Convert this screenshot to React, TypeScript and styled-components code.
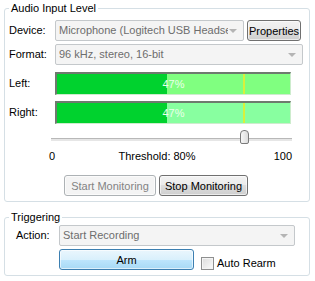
import React from "react";
import styled, { createGlobalStyle } from "styled-components";

const Global = createGlobalStyle`
  html, body {
    margin: 0;
    padding: 0;
    background: #ffffff;
  }
  body {
    font-family: "Liberation Sans", Arial, sans-serif;
    font-size: 11px;
    color: #000000;
  }
`;

const Page = styled.div`
  width: 315px;
  height: 281px;
  padding-top: 8px;
  box-sizing: border-box;
`;

const GroupBox = styled.section<{ $gap?: number }>`
  margin: ${(p) => p.$gap || 0}px 5px 0 4px;
  border: 1px solid #d5dfe5;
  border-radius: 3px;
  padding: 0 0 5px 0;
`;

const GroupTitle = styled.div`
  display: table;
  margin: -8px 0 0 4px;
  padding: 0 2px;
  background: #ffffff;
  line-height: 15px;
`;

const FormGrid = styled.div<{ $label: number; $left: number }>`
  display: grid;
  grid-template-columns: ${(p) => p.$label}px 1fr;
  padding-left: ${(p) => p.$left}px;
  align-items: center;
`;

const Label = styled.span<{ $top?: number }>`
  line-height: 15px;
  margin-top: ${(p) => p.$top || 0}px;
`;

const Row = styled.div<{ $top: number }>`
  display: flex;
  align-items: center;
  margin-top: ${(p) => p.$top}px;
`;

const Combo = styled.div<{ $width: number }>`
  position: relative;
  width: ${(p) => p.$width}px;
  height: 21px;
  box-sizing: border-box;
  border: 1px solid #c4c8cb;
  border-radius: 2px;
  background: #f4f4f4;
  color: #6d6d6d;
  line-height: 19px;
  padding: 0 15px 0 3px;
  &::after {
    content: "";
    position: absolute;
    right: 6px;
    top: 8px;
    border-left: 4px solid transparent;
    border-right: 4px solid transparent;
    border-top: 4px solid #b4b4b4;
  }
`;

const ComboText = styled.span`
  display: block;
  white-space: nowrap;
  overflow: hidden;
`;

const Button = styled.button<{ $width: number; $variant?: "disabled" | "hot" | "normal" }>`
  width: ${(p) => p.$width}px;
  height: 21px;
  box-sizing: border-box;
  padding: 0;
  font-family: inherit;
  font-size: 11px;
  border-radius: 3px;
  border: 1px solid
    ${(p) => (p.$variant === "disabled" ? "#adb2b5" : p.$variant === "hot" ? "#3c7fb1" : "#707070")};
  color: ${(p) => (p.$variant === "disabled" ? "#838383" : "#000000")};
  background: ${(p) =>
    p.$variant === "disabled"
      ? "#f4f4f4"
      : p.$variant === "hot"
      ? "linear-gradient(#eaf6fd 0%, #d9f0fc 50%, #bee6fd 50%, #a7d9f5 100%)"
      : "linear-gradient(#f2f2f2 0%, #ebebeb 50%, #dddddd 50%, #cfcfcf 100%)"};
  box-shadow: inset 0 0 0 1px rgba(255, 255, 255, 0.6);
`;

const MeterBox = styled.div`
  position: relative;
  display: flex;
  width: 236px;
  height: 23px;
  box-sizing: border-box;
  border-top: 2px solid #6e7a6e;
  border-left: 2px solid #6e7a6e;
  border-right: 1px solid #cdeccd;
  border-bottom: 1px solid #cdeccd;
`;

const FillHot = styled.div`
  background: #00d22e;
`;

const FillRest = styled.div<{ $tint: string }>`
  flex: 1;
  background: ${(p) => p.$tint};
`;

const ThresholdLine = styled.div`
  position: absolute;
  top: 0;
  bottom: 0;
  width: 2px;
  background: #d8f03c;
`;

const MeterText = styled.span`
  position: absolute;
  inset: 0;
  text-align: center;
  line-height: 20px;
  color: #eaffea;
`;

const SliderArea = styled.div`
  position: relative;
  margin: 3px 0 0 46px;
  width: 241px;
  height: 20px;
`;

const Track = styled.div`
  position: absolute;
  left: 0;
  right: 0;
  top: 11px;
  height: 3px;
  box-sizing: border-box;
  border-top: 1px solid #b8b8b8;
  background: #e6e6e6;
`;

const Thumb = styled.div`
  position: absolute;
  top: 3px;
  width: 9px;
  height: 14px;
  margin-left: -4px;
  box-sizing: border-box;
  border: 1px solid #7a7a7a;
  border-radius: 4px 4px 2px 2px;
  background: linear-gradient(90deg, #f6f6f6, #dcdcdc);
`;

const Ticks = styled.div`
  display: grid;
  grid-template-columns: 1fr auto 1fr;
  margin-top: 2px;
  line-height: 15px;
`;

const TickLeft = styled.span`
  padding-left: 44px;
`;

const TickRight = styled.span`
  text-align: right;
  padding-right: 17px;
`;

const ButtonRow = styled.div`
  display: flex;
  gap: 3px;
  margin: 11px 0 0 59px;
`;

const Check = styled.span`
  display: inline-block;
  width: 13px;
  height: 13px;
  box-sizing: border-box;
  border: 1px solid #8e8f8f;
  background: linear-gradient(135deg, #dcdcdc, #fbfbfb);
  box-shadow: inset 0 0 0 1px #f4f4f4;
  margin: 0 3px 0 7px;
`;

const CheckLabel = styled.label`
  display: flex;
  align-items: center;
  padding-top: 7px;
`;

function Meter({ percent, threshold, tint }: { percent: number; threshold: number; tint: string }) {
  return (
    <MeterBox>
      <FillHot style={{ width: `${percent}%` }} />
      <FillRest $tint={tint} />
      <ThresholdLine style={{ left: `${threshold}%` }} />
      <MeterText>{percent}%</MeterText>
    </MeterBox>
  );
}

export default function App() {
  return (
    <Page>
      <Global />
      <GroupBox>
        <GroupTitle>Audio Input Level</GroupTitle>
        <FormGrid $label={46} $left={4}>
          <Label $top={4}>Device:</Label>
          <Row $top={4}>
            <Combo $width={189}>
              <ComboText>Microphone (Logitech USB Headset)</ComboText>
            </Combo>
            <Button $width={54} style={{ marginLeft: 3 }}>Properties</Button>
          </Row>
          <Label $top={3}>Format:</Label>
          <Row $top={3}>
            <Combo $width={248}>
              <ComboText>96 kHz, stereo, 16-bit</ComboText>
            </Combo>
          </Row>
          <Label $top={7}>Left:</Label>
          <Row $top={7}>
            <Meter percent={47} threshold={80} tint="#80ff80" />
          </Row>
          <Label $top={6}>Right:</Label>
          <Row $top={6}>
            <Meter percent={47} threshold={80} tint="#88ffa0" />
          </Row>
        </FormGrid>
        <SliderArea>
          <Track />
          <Thumb style={{ left: "80%" }} />
        </SliderArea>
        <Ticks>
          <TickLeft>0</TickLeft>
          <span>Threshold: 80%</span>
          <TickRight>100</TickRight>
        </Ticks>
        <ButtonRow>
          <Button $width={92} $variant="disabled" disabled>
            Start Monitoring
          </Button>
          <Button $width={89}>Stop Monitoring</Button>
        </ButtonRow>
      </GroupBox>
      <GroupBox $gap={15}>
        <GroupTitle>Triggering</GroupTitle>
        <FormGrid $label={43} $left={11}>
          <Label>Action:</Label>
          <Combo $width={236}>
            <ComboText>Start Recording</ComboText>
          </Combo>
          <span />
          <Row $top={3}>
            <Button $width={135} $variant="hot">Arm</Button>
            <CheckLabel>
              <Check />
              Auto Rearm
            </CheckLabel>
          </Row>
        </FormGrid>
      </GroupBox>
    </Page>
  );
}
